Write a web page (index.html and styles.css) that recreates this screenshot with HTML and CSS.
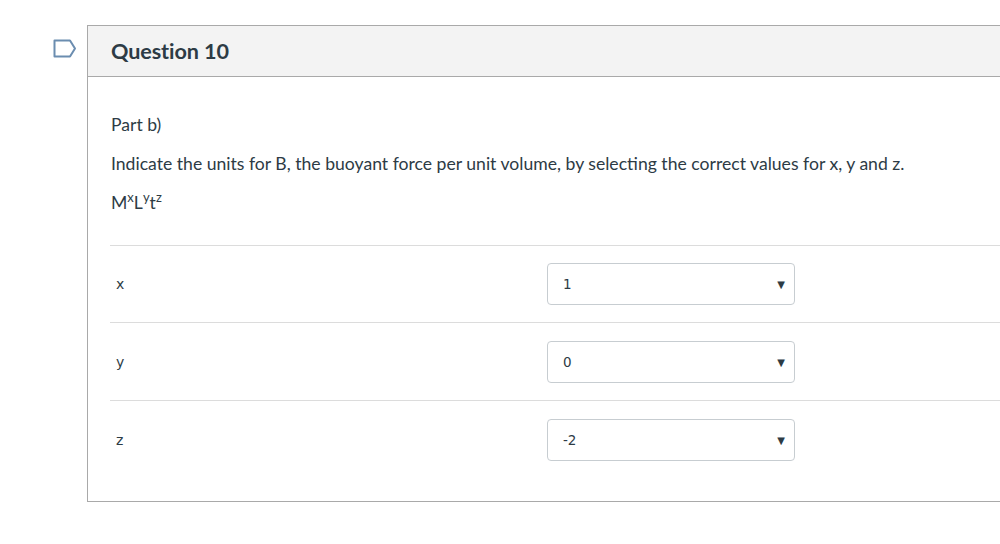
FILE: index.html
```html
<!DOCTYPE html>
<html lang="en">
<head>
  <meta charset="UTF-8">
  <title>Question 10</title>
  <link rel="stylesheet" href="styles.css">
</head>
<body>
  <div class="quiz-page">
    <div class="flag-col">
      <svg class="flag-icon" width="24" height="19" viewBox="0 0 24 19" fill="none" stroke="#6b8db0" stroke-width="2" stroke-linejoin="round">
        <path d="M1.5 1.5 H17 L22 9.5 L17 17.5 H1.5 Z"></path>
      </svg>
    </div>

    <div class="question">
      <div class="question-header">
        <h2>Question 10</h2>
      </div>

      <div class="question-body">
        <p>Part b)</p>
        <p>Indicate the units for B, the buoyant force per unit volume, by selecting the correct values for x, y and z.</p>
        <p>M<sup>x</sup>L<sup>y</sup>t<sup>z</sup></p>

        <div class="answers">
          <div class="answer-row">
            <div class="answer-label">x</div>
            <div class="select-box">
              <span>1</span>
              <span class="select-arrow">&#9660;</span>
            </div>
          </div>
          <div class="answer-row">
            <div class="answer-label">y</div>
            <div class="select-box">
              <span>0</span>
              <span class="select-arrow">&#9660;</span>
            </div>
          </div>
          <div class="answer-row">
            <div class="answer-label">z</div>
            <div class="select-box">
              <span>-2</span>
              <span class="select-arrow">&#9660;</span>
            </div>
          </div>
        </div>
      </div>
    </div>
  </div>
</body>
</html>
```

FILE: styles.css
```css
:root {
  --text: #2d3b45;
  --card-border: #a9a9a9;
  --header-bg: #f3f3f3;
  --row-line: #dcdcdc;
  --input-border: #c7cdd1;
}

* {
  margin: 0;
  padding: 0;
  box-sizing: border-box;
}

body {
  font-family: 'Lato', 'Helvetica Neue', Arial, sans-serif;
  color: var(--text);
  background: #fff;
  overflow: hidden;
}

.quiz-page {
  display: flex;
  align-items: flex-start;
  gap: 10px;
  padding: 25px 0 0 53px;
}

.flag-col {
  padding-top: 14px;
}

.flag-icon {
  display: block;
}

/* Question card */
.question {
  flex-shrink: 0;
  width: 1000px;
  border: 1px solid var(--card-border);
}

.question-header {
  height: 51px;
  display: flex;
  align-items: center;
  padding: 0 23px;
  background-color: var(--header-bg);
  border-bottom: 1px solid var(--card-border);
}

.question-header h2 {
  font-size: 21.6px;
  font-weight: 700;
  letter-spacing: -0.1px;
}

.question-body {
  padding: 36px 0 23px 22px;
}

.question-body p {
  font-size: 17.6px;
  line-height: 24px;
  margin: 0 0 15px 1px;
}

.question-body sup {
  font-size: 13px;
  line-height: 0;
  vertical-align: 7px;
}

/* Answer rows */
.answers {
  margin-top: 30px;
}

.answer-row {
  display: flex;
  align-items: center;
  padding: 17px 0;
  border-top: 1px solid var(--row-line);
}

.answer-row + .answer-row {
  padding-top: 18px;
}

.answer-label {
  width: 437px;
  padding-left: 6px;
  font-family: 'DejaVu Sans', Verdana, sans-serif;
  font-size: 14px;
}

.select-box {
  width: 248px;
  height: 42px;
  display: flex;
  align-items: center;
  justify-content: space-between;
  padding: 0 9px 0 15px;
  border: 1px solid var(--input-border);
  border-radius: 4px;
  font-family: 'DejaVu Sans', Verdana, sans-serif;
  font-size: 13.5px;
}

.select-arrow {
  font-size: 10px;
  color: var(--text);
}
```
